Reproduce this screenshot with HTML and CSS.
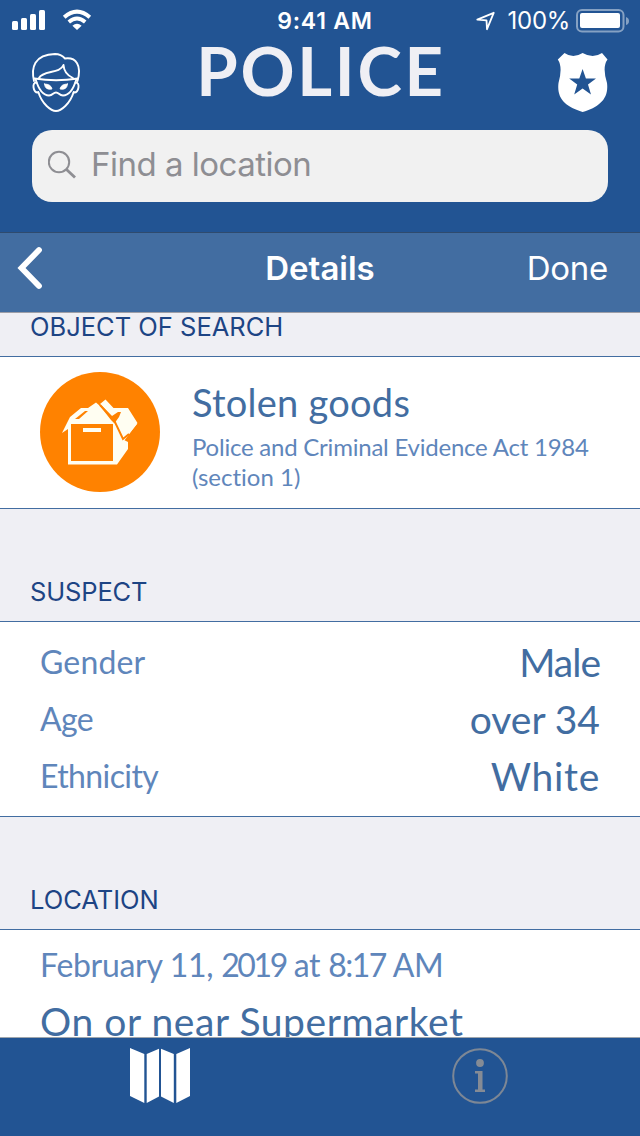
FILE: index.html
```html
<!DOCTYPE html>
<html lang="en">
<head>
<meta charset="utf-8">
<title>Police</title>
<link rel="stylesheet" href="styles.css">
</head>
<body>
<div class="app">
  <header class="header">
    <div class="status">
      <div class="status-left">
        <svg class="signal" width="34" height="21" viewBox="0 0 34 21" fill="#fff"><rect x="0" y="12" width="6" height="9" rx="1.5"/><rect x="9" y="9" width="6" height="12" rx="1.5"/><rect x="18" y="5" width="6" height="16" rx="1.5"/><rect x="27" y="1" width="6" height="20" rx="1.5"/></svg>
        <svg class="wifi" width="30" height="22" viewBox="0 0 30 22" fill="none" stroke="#fff"><path d="M2.2 8.3Q15 -3 27.8 8.3" stroke-width="4"/><path d="M6.8 13Q15 6 23.2 13" stroke-width="3.8"/><path d="M15 21L10.4 16.7Q15 12.8 19.6 16.7Z" fill="#fff" stroke="none"/></svg>
      </div>
      <div class="clock">9:41 AM</div>
      <div class="status-right">
        <svg class="arrow" width="22" height="22" viewBox="0 0 22 22" fill="none" stroke="#fff" stroke-width="1.8" stroke-linejoin="round"><path d="M2.300 10.600L18.700 3.800L12 20.200L11.500 11.300Z"/></svg>
        <span class="percent">100%</span>
        <svg class="battery" width="54" height="24" viewBox="0 0 54 24"><rect x="1" y="1" width="46.500" height="21.500" rx="5" fill="none" stroke="#fff" stroke-opacity=".45" stroke-width="2"/><rect x="4" y="4" width="40" height="15" rx="2" fill="#fff"/><path d="M50 8Q53 9 53 12T50 16Z" fill="#fff" fill-opacity=".45"/></svg>
      </div>
    </div>
    <div class="brand">
      <svg class="thief" width="52" height="64" viewBox="0 0 52 64" fill="none" stroke="#fff" stroke-width="1.9" stroke-linejoin="round" stroke-linecap="round"><path d="M4 31C1 18 4 4.500 25 4Q31 4 35 8.500C46 7 52 15 47.500 31"/><path d="M9 28C13 20 30 24 33.500 15Q34 24 43 28"/><path d="M4.500 28.500Q26 32 48 28.500"/><path d="M6.500 32.500C1.500 32 3 43 8.300 42.500M45.500 32.500C50.500 32 49 43 43.700 42.500"/><path d="M5.500 29C8.500 39 13 45.500 19 45.500C23 45.500 23 42.500 26 42.500S29 45.500 33 45.500C39 45.500 43.500 39 46.500 29"/><path d="M8.300 42C12 54 21 61 26 61S40 54 43.700 42"/><path d="M14.500 34Q21 34 22 39Q15 40.500 14.500 34ZM37.500 34Q31 34 30 39Q37 40.500 37.500 34Z" fill="#fff" stroke-width=".8"/></svg>
      <h1 class="title">POLICE</h1>
      <svg class="badge" width="52" height="64" viewBox="0 0 52 64"><path d="M7.500 3Q16 9 25.600 3Q36 9 45 3L50.500 9.500Q45 17 50 33C52 49 42 57 25.600 62C9 57 -.500 49 1.500 33Q6 17 .800 9.500Z" fill="#fff"/><path d="M25.600 19L28.900 28.500H39L31 34.500L34 44.500L25.600 38.500L17.200 44.500L20.200 34.500L12.200 28.500H22.300Z" fill="#225493"/></svg>
    </div>
    <div class="search">
      <svg width="30" height="30" viewBox="0 0 30 30" fill="none" stroke="#8e8e93"><circle cx="11" cy="12" r="10.200" stroke-width="2"/><path d="M18.500 19.500L27 27.500" stroke-width="2.800"/></svg>
      <span class="placeholder">Find a location</span>
    </div>
  </header>
  <nav class="nav">
    <svg class="back" width="28" height="44" viewBox="0 0 28 44" fill="none" stroke="#fff" stroke-width="5.800" stroke-linecap="round" stroke-linejoin="miter"><path d="M23 4L5.500 22L23 40"/></svg>
    <h2 class="nav-title">Details</h2>
    <span class="done">Done</span>
  </nav>
  <main class="content">
    <h3 class="section section-first"><span class="object">OBJECT OF SEARCH</span></h3>
    <div class="cell object-cell">
      <svg class="box" width="120" height="120" viewBox="0 0 120 120"><circle cx="60" cy="60" r="60" fill="#ff8200"/><g fill="#fffef2"><path d="M22 61L30 45L41 36H48L56 30.500L60 34L71 48L75 52L79 47L97 52L84 68L88 70V77L77 92.500H28V57Z"/><path d="M60 32L65.500 27.500L73.500 36H88L97.500 51L84 69L74 52L79 45L81 40H78L72 44Z"/></g><path d="M31 52H73V89H31Z" fill="#ff8200"/><path d="M43 56H61V60H43Z" fill="#fffef2"/><path d="M35 47L45 39H48L39 47Z" fill="#ff8200"/><path d="M60 33L74 48L83 67L89 62" fill="none" stroke="#ff8200" stroke-width="2"/><path d="M74 60L83 76L76 88Z" fill="#fffef2"/></svg>
      <div class="object-text">
        <p class="goods"><span class="t-goods">Stolen goods</span></p>
        <p class="act"><span class="t-act">Police and Criminal Evidence Act 1984</span><br><span class="t-section">(section 1)</span></p>
      </div>
    </div>
    <h3 class="section"><span class="suspect">SUSPECT</span></h3>
    <dl class="cell facts">
      <div class="fact"><dt class="gender">Gender</dt><dd class="male">Male</dd></div>
      <div class="fact"><dt class="age">Age</dt><dd class="over">over 34</dd></div>
      <div class="fact"><dt class="ethnicity">Ethnicity</dt><dd class="white">White</dd></div>
    </dl>
    <h3 class="section"><span class="loc">LOCATION</span></h3>
    <div class="cell location-cell">
      <p class="date">February <span class="day">11,</span> <span class="year">2019</span> at <span class="time">8:17</span> AM</p>
      <p class="place">On or near Supermarket</p>
    </div>
  </main>
  <footer class="tabs">
    <div class="tab"><svg width="60" height="56" viewBox="0 0 60 56" fill="#fff"><path d="M0 0L14.300 6V55L0 48ZM16.700 6L29 .8V48.500L16.700 55ZM31 .8L43.800 6V55L31 48.500ZM46.300 6L60 0V48L46.300 55Z"/></svg></div>
    <div class="tab"><svg width="56" height="56" viewBox="0 0 56 56" fill="#858b95"><circle cx="28" cy="28" r="26.800" fill="none" stroke="#7d8795" stroke-width="2"/><circle cx="28" cy="15" r="3.900"/><path d="M23 23H30.500V41.500H33V44H23V41.500H26V25.500H23Z"/></svg></div>
  </footer>
</div>
</body>
</html>
```

FILE: styles.css
```css
* { box-sizing: border-box; margin: 0; padding: 0; }
body { width: 640px; height: 1136px; overflow: hidden; background: #efeff4; font-family: Lato, "Open Sans", sans-serif; font-variant-ligatures: none; }
svg { display: block; flex: none; }
.app { display: flex; flex-direction: column; height: 1136px; }

.header { height: 233px; background: #225493; border-bottom: 1px solid #2f4b6e; font-family: Inter, sans-serif; color: #fff; }
.status { height: 40px; display: grid; grid-template-columns: 1fr auto 1fr; align-items: start; }
.status-left { display: flex; padding: 9px 0 0 12px; gap: 16px; }
.clock { font-size: 23px; line-height: 24px; font-weight: 600; letter-spacing: .75px; padding: 9px 0 0 10px; }
.status-right { display: flex; justify-content: flex-end; padding-right: 10px; }
.arrow { margin: 9px 11px 0 0; }
.percent { font-size: 24px; line-height: 24px; letter-spacing: -.3px; margin-top: 9px; white-space: nowrap; }
.battery { margin: 9px 0 0 6px; }
.brand { height: 90px; padding: 10px 32px 0 30px; display: flex; justify-content: space-between; }
.title { font: 700 67px/52px Lato, sans-serif; letter-spacing: 2.7px; margin: -6px -3px 0 0; color: #efeff4; white-space: nowrap; }
.badge { margin-right: -1px; }
.search { margin: 0 32px; height: 72px; border-radius: 20px; background: #f1f1f1; display: flex; align-items: flex-start; padding: 20px 16px; gap: 13px; }
.placeholder { font-size: 33px; line-height: 40px; margin-top: -6px; letter-spacing: -.5px; color: #8e8e93; white-space: nowrap; }

.nav { height: 80px; flex: none; background: #426da1; border-bottom: 1px solid #9d9ea7; display: grid; grid-template-columns: 1fr auto 1fr; font-family: Inter, sans-serif; color: #fff; line-height: 70px; }
.back { margin: 13px 0 0 16px; }
.nav-title { font-size: 33px; font-weight: 600; }
.done { font-size: 33px; letter-spacing: -.3px; text-align: right; padding-right: 32px; }

.content { height: 724px; overflow: hidden; }
.section { height: 112px; padding: 66px 0 0 30px; font: 400 25.500px/34px Inter, sans-serif; color: #1d4484; white-space: nowrap; }
.section-first { height: 43px; padding-top: 0; margin-top: 0; line-height: 28px; }
.suspect { letter-spacing: -.15px; }
.cell { background: #fff; border-top: 1px solid #426da1; border-bottom: 1px solid #426da1; color: #5f86bb; white-space: nowrap; }
.object-cell { height: 153px; display: flex; padding: 15px 0 0 40px; gap: 32px; }
.goods { font-size: 38px; line-height: 48px; letter-spacing: .25px; color: #426da1; margin-top: 6px; }
.act { font-size: 24px; line-height: 30px; margin-top: 6px; letter-spacing: -.22px; }
.t-section { letter-spacing: 0; }
.facts { height: 196px; padding: 13px 40px 0; }
.fact { display: flex; justify-content: space-between; height: 57px; line-height: 54px; }
.fact dt { font-size: 32px; }
.fact dd { font-size: 39px; color: #426da1; }
.gender { letter-spacing: .15px; }
.age { letter-spacing: -.7px; }
.ethnicity { letter-spacing: -.6px; }
.male { letter-spacing: -1px; }
.white { letter-spacing: .7px; }
.location-cell { padding: 9px 40px; height: 180px; }
.date { font-size: 32px; line-height: 52px; letter-spacing: -.3px; }
.year { letter-spacing: -2.4px; }
.time { letter-spacing: -1.500px; }
.place { font-size: 39px; line-height: 60px; letter-spacing: .57px; color: #426da1; }

.tabs { height: 99px; background: #225493; border-top: 1px solid #9fa6ad; display: grid; grid-template-columns: 1fr 1fr; padding-top: 10px; }
.tab { display: flex; justify-content: center; align-items: flex-start; }
```
